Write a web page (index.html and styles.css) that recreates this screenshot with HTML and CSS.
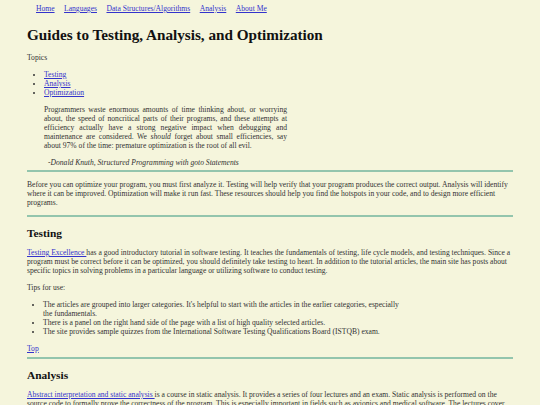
FILE: index.html
```html
<!DOCTYPE html>
<html lang="en">
<head>
<meta charset="utf-8">
<title>Guides to Testing, Analysis, and Optimization</title>
<link rel="stylesheet" href="styles.css">
</head>
<body>
<nav class="topnav">
  <ul>
    <li><a href="#">Home</a></li>
    <li><a href="#">Languages</a></li>
    <li><a href="#">Data Structures/Algorithms</a></li>
    <li><a href="#">Analysis</a></li>
    <li><a href="#">About Me</a></li>
  </ul>
</nav>
<h1 class="title" id="top">Guides to Testing, Analysis, and Optimization</h1>
<p class="topics-label">Topics</p>
<ul class="topics">
  <li><a href="#testing">Testing</a></li>
  <li><a href="#analysis">Analysis</a></li>
  <li><a href="#optimization">Optimization</a></li>
</ul>
<blockquote class="quote">
  <p>Programmers waste enormous amounts of time thinking about, or worrying about, the speed of noncritical parts of their programs, and these attempts at efficiency actually have a strong negative impact when debugging and maintenance are considered. We <em>should</em> forget about small efficiencies, say about 97% of the time: premature optimization is the root of all evil.</p>
</blockquote>
<p class="cite">-Donald Knuth, Structured Programming with goto Statements</p>
<hr class="rule rule-quote">
<p class="intro">Before you can optimize your program, you must first analyze it. Testing will help verify that your program produces the correct output. Analysis will identify where it can be improved. Optimization will make it run fast. These resources should help you find the hotspots in your code, and to design more efficient programs.</p>
<hr class="rule rule-intro">
<section class="section" id="testing">
  <h2>Testing</h2>
  <p><a href="#">Testing Excellence </a>has a good introductory tutorial in software testing. It teaches the fundamentals of testing, life cycle models, and testing techniques. Since a program must be correct before it can be optimized, you should definitely take testing to heart. In addition to the tutorial articles, the main site has posts about specific topics in solving problems in a particular language or utilizing software to conduct testing.</p>
  <p>Tips for use:</p>
  <ul class="tips">
    <li>The articles are grouped into larger categories. It's helpful to start with the articles in the earlier categories, especially the fundamentals.</li>
    <li>There is a panel on the right hand side of the page with a list of high quality selected articles.</li>
    <li>The site provides sample quizzes from the International Software Testing Qualifications Board (ISTQB) exam.</li>
  </ul>
  <p class="toplink"><a href="#top">Top</a></p>
</section>
<hr class="rule rule-section">
<section class="section" id="analysis">
  <h2>Analysis</h2>
  <p><a href="#">Abstract interpretation and static analysis </a>is a course in static analysis. It provides a series of four lectures and an exam. Static analysis is performed on the source code to formally prove the correctness of the program. This is especially important in fields such as avionics and medical software. The lectures cover the theory of abstract interpretation and its application to real programs.</p>
</section>
</body>
</html>
```

FILE: styles.css
```css
html {
  background: #f5f5dc;
}
body {
  margin: 0;
  padding: 0 27px;
  background: #f5f5dc;
  color: #333;
  font-family: "Liberation Serif", "Times New Roman", serif;
  font-size: 7.6px;
}
a {
  color: #3333cc;
}
p {
  margin: 8px 0;
}
.topnav ul {
  list-style: none;
  margin: 0;
  padding: 4px 0 0 9px;
  display: flex;
  gap: 9.5px;
}
.title {
  font-size: 15.2px;
  font-weight: bold;
  color: #111;
  margin: 13px 0 9px;
}
.topics-label {
  margin: 0 0 8px;
}
.topics {
  margin: 0;
  padding-left: 17px;
}
.quote {
  margin: 8px 0 0 17px;
  width: 243px;
}
.quote p {
  margin: 0;
  text-align: justify;
}
.cite {
  font-style: italic;
  margin: 8px 0 0 21px;
}
.rule {
  border: 0;
  height: 2px;
  background: #93c5ad;
  margin: 3px 0 8px;
}
.rule-intro {
  margin-top: 6px;
}
.section h2 {
  font-size: 11.4px;
  font-weight: bold;
  color: #111;
  margin: 10px 0 9px;
}
.tips {
  margin: 8px 0;
  padding-left: 16px;
  width: 364px;
}
.toplink {
  margin: 8px 0 0;
}
.rule-section {
  margin-top: 4px;
}
```
